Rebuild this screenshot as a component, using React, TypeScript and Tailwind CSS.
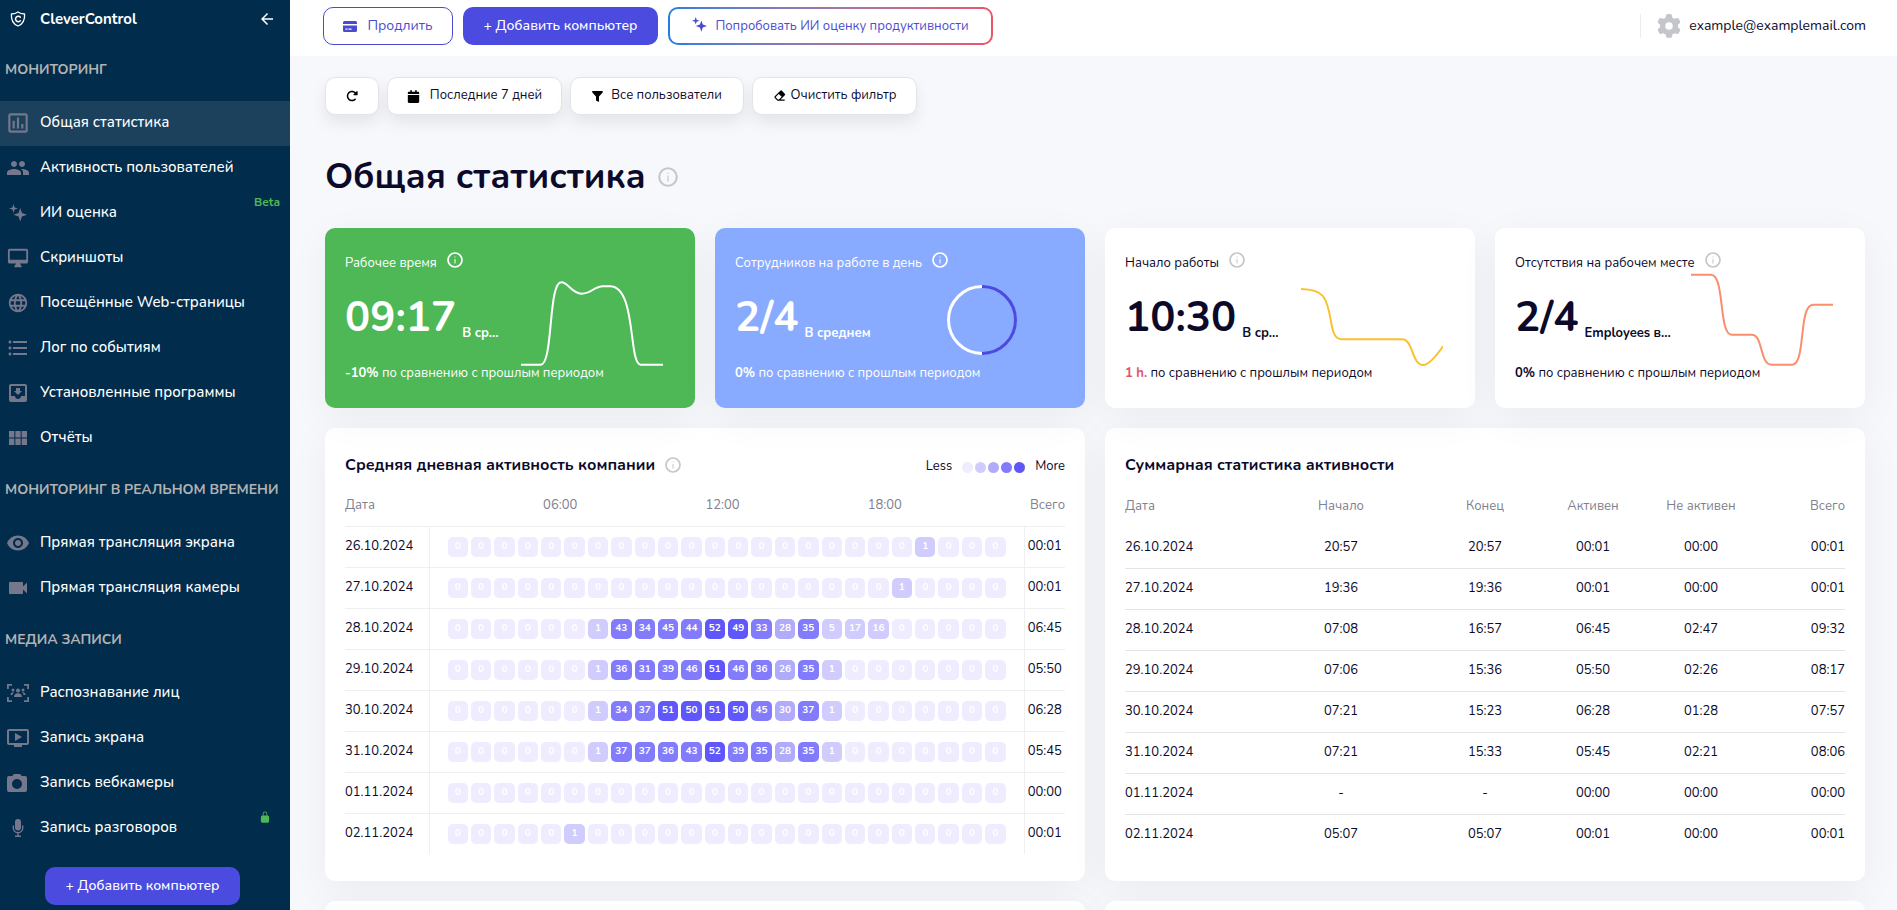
import React from "react";
import {
  MdArrowBack,
  MdFormatListBulleted,
  MdGroup,
  MdLanguage,
  MdMoveToInbox,
  MdOndemandVideo,
  MdOutlineDesktopMac,
  MdOutlinePoll,
  MdVideocam,
  MdViewModule,
  MdVisibility,
} from "react-icons/md";
import { FaCalendar, FaGear, FaRotateRight } from "react-icons/fa6";
import { IoLockClosed } from "react-icons/io5";
import { BiSolidEraser } from "react-icons/bi";

// Custom icons

const Logo = () => (
  <svg width="16" height="16" viewBox="0 0 16 16" fill="none" stroke="white" strokeLinecap="round" strokeLinejoin="round">
    <path d="M8 1C6 2.4 3.4 3 1.4 3c-.4 6 1.4 10 6.6 12 5.2-2 7-6 6.6-12C12.6 3 10 2.4 8 1Z" strokeWidth="1.3" />
    <path d="M10.3 6.2A2.7 2.7 0 1 0 10.3 9.7" strokeWidth="1.5" />
  </svg>
);

const Sparkles = ({ size = 20 }: { size?: number }) => (
  <svg width={size} height={size} viewBox="0 0 20 20" fill="currentColor">
    <path d="M5 0 6.2 3.8 10 5 6.2 6.2 5 10 3.8 6.2 0 5l3.8-1.2ZM12.5 4.5l1.9 5.6L20 12l-5.6 1.9-1.9 5.6-1.9-5.6L5 12l5.6-1.9Z" />
  </svg>
);

const FaceScan = () => (
  <svg width="22" height="18" viewBox="0 0 22 18" fill="currentColor">
    <path d="M0 5V0h5v1.800H1.800V5ZM17 0h5v5h-1.800V1.800H17ZM0 13h1.800v3.200H5V18H0ZM20.200 13H22v5h-5v-1.800h3.200Z" />
    <circle cx="11" cy="6.500" r="2" />
    <circle cx="6" cy="6" r="1.500" />
    <circle cx="16" cy="6" r="1.500" />
    <path d="M7 13c0-2.500 1.600-3.800 4-3.800s4 1.300 4 3.800ZM3.500 11c0-1.800 1-2.800 3.500-2.600-1 .8-1.500 1.500-1.600 2.600ZM18.500 11c0-1.800-1-2.800-3.500-2.600 1 .8 1.500 1.500 1.600 2.600Z" />
  </svg>
);

const Camera = () => (
  <svg width="20" height="18" viewBox="0 0 20 18" fill="currentColor" fillRule="evenodd" className="mr-[2px]">
    <path d="M7 0h6l1.800 2H18a2 2 0 0 1 2 2v12a2 2 0 0 1-2 2H2a2 2 0 0 1-2-2V4a2 2 0 0 1 2-2h3.200ZM10 5a5 5 0 1 0 0 10 5 5 0 0 0 0-10Z" />
  </svg>
);

const Mic = () => (
  <svg width="12" height="18" viewBox="0 0 12 18" fill="currentColor">
    <rect x="3" y="0" width="6" height="11.500" rx="3" />
    <path d="M1.300 6.500V9a4.700 4.700 0 0 0 9.400 0V6.500M6 13.500V17M3 17.300h6" fill="none" stroke="currentColor" strokeWidth="1.400" />
  </svg>
);

const CardIcon = () => (
  <svg width="14" height="11" viewBox="0 0 14 11" fill="currentColor">
    <path d="M1.500 0h11A1.500 1.500 0 0 1 14 1.500V3H0V1.500A1.500 1.500 0 0 1 1.500 0ZM0 4.500h14v5A1.500 1.500 0 0 1 12.500 11h-11A1.500 1.500 0 0 1 0 9.500Zm2.500 3v1.200h2V7.500Zm3 0v1.200h3V7.500Z" fillRule="evenodd" />
  </svg>
);

const Funnel = () => (
  <svg width="11" height="11" viewBox="0 0 11 11" fill="black">
    <path d="M.3 0h10.400v1.500L7 5.500V11L4 9.500v-4L.3 1.500Z" />
  </svg>
);

const Info = ({ size = 16, className = "text-[#c6c7cb]" }: { size?: number; className?: string }) => (
  <svg width={size} height={size} viewBox="0 0 16 16" fill="none" stroke="currentColor" className={className}>
    <circle cx="8" cy="8" r="7" strokeWidth="1.700" />
    <path d="M8 7v4.500M8 4.500v1" strokeWidth="1" />
  </svg>
);

// Data

type NavItem = { label: string; icon: React.ReactNode; active?: boolean; badge?: React.ReactNode };

const navGroups: { title: string; items: NavItem[] }[] = [
  {
    title: "МОНИТОРИНГ",
    items: [
      { label: "Общая статистика", icon: <MdOutlinePoll size={26} />, active: true },
      { label: "Активность пользователей", icon: <MdGroup size={24} /> },
      {
        label: "ИИ оценка",
        icon: <Sparkles size={18} />,
        badge: <span className="text-xs font-bold text-[#4eb857]">Beta</span>,
      },
      { label: "Скриншоты", icon: <MdOutlineDesktopMac size={22} /> },
      { label: "Посещённые Web-страницы", icon: <MdLanguage size={22} /> },
      { label: "Лог по событиям", icon: <MdFormatListBulleted size={24} /> },
      { label: "Установленные программы", icon: <MdMoveToInbox size={24} /> },
      { label: "Отчёты", icon: <MdViewModule size={24} /> },
    ],
  },
  {
    title: "МОНИТОРИНГ В РЕАЛЬНОМ ВРЕМЕНИ",
    items: [
      { label: "Прямая трансляция экрана", icon: <MdVisibility size={24} /> },
      { label: "Прямая трансляция камеры", icon: <MdVideocam size={24} /> },
    ],
  },
  {
    title: "МЕДИА ЗАПИСИ",
    items: [
      { label: "Распознавание лиц", icon: <FaceScan /> },
      { label: "Запись экрана", icon: <MdOndemandVideo size={24} /> },
      { label: "Запись вебкамеры", icon: <Camera /> },
      {
        label: "Запись разговоров",
        icon: <Mic />,
        badge: <IoLockClosed size={12} className="mr-[9px] text-[#4eb857]" />,
      },
    ],
  },
];

const zeros = (n: number): number[] => Array(n).fill(0);

const activity = [
  { date: "26.10.2024", hours: [...zeros(20), 1, ...zeros(3)], total: "00:01" },
  { date: "27.10.2024", hours: [...zeros(19), 1, ...zeros(4)], total: "00:01" },
  { date: "28.10.2024", hours: [...zeros(6), 1, 43, 34, 45, 44, 52, 49, 33, 28, 35, 5, 17, 16, ...zeros(5)], total: "06:45" },
  { date: "29.10.2024", hours: [...zeros(6), 1, 36, 31, 39, 46, 51, 46, 36, 26, 35, 1, ...zeros(7)], total: "05:50" },
  { date: "30.10.2024", hours: [...zeros(6), 1, 34, 37, 51, 50, 51, 50, 45, 30, 37, 1, ...zeros(7)], total: "06:28" },
  { date: "31.10.2024", hours: [...zeros(6), 1, 37, 37, 36, 43, 52, 39, 35, 28, 35, 1, ...zeros(7)], total: "05:45" },
  { date: "01.11.2024", hours: zeros(24), total: "00:00" },
  { date: "02.11.2024", hours: [...zeros(5), 1, ...zeros(18)], total: "00:01" },
];

const summary = [
  ["26.10.2024", "20:57", "20:57", "00:01", "00:00", "00:01"],
  ["27.10.2024", "19:36", "19:36", "00:01", "00:00", "00:01"],
  ["28.10.2024", "07:08", "16:57", "06:45", "02:47", "09:32"],
  ["29.10.2024", "07:06", "15:36", "05:50", "02:26", "08:17"],
  ["30.10.2024", "07:21", "15:23", "06:28", "01:28", "07:57"],
  ["31.10.2024", "07:21", "15:33", "05:45", "02:21", "08:06"],
  ["01.11.2024", "-", "-", "00:00", "00:00", "00:00"],
  ["02.11.2024", "05:07", "05:07", "00:01", "00:00", "00:01"],
];

const levels = ["bg-[#eeecfe]", "bg-[#d0ccfd]", "bg-[#b0abfb]", "bg-[#827bfb]", "bg-[#5f57fb]"];

const levelOf = (n: number) => {
  if (n === 0) return levels[0];
  if (n < 20) return levels[1];
  if (n <= 30) return levels[2];
  if (n < 49) return levels[3];
  return levels[4];
};

// Building blocks

const Sidebar = () => (
  <aside className="flex w-[290px] shrink-0 flex-col bg-[#012c4b] text-white">
    <div className="flex h-[41px] shrink-0 items-center pb-[3px] pl-[10px] pr-[14px]">
      <Logo />
      <a href="#" className="ml-[14px] text-[15px] font-bold">CleverControl</a>
      <button type="button" aria-label="Свернуть меню" className="ml-auto">
        <MdArrowBack size={18} />
      </button>
    </div>
    <nav>
      {navGroups.map((group) => (
        <section key={group.title}>
          <h2 className="flex h-[60px] items-center whitespace-nowrap pb-[2px] pl-[5px] text-sm font-bold text-[#b2b2b2]">
            {group.title}
          </h2>
          <ul>
            {group.items.map((item) => (
              <li key={item.label}>
                <a
                  href="#"
                  className={`relative flex h-[45px] items-center gap-2 pb-[2px] pl-1 text-[15px] font-medium ${item.active ? "bg-[#1b415d]" : ""}`}
                >
                  <span className="flex w-7 shrink-0 justify-center text-[#75778c]">{item.icon}</span>
                  {item.label}
                  {item.badge && <span className="absolute right-[10px] top-[3px] flex h-4 items-center">{item.badge}</span>}
                </a>
              </li>
            ))}
          </ul>
        </section>
      ))}
    </nav>
    <button type="button" className="ml-[45px] mt-4 h-[38px] w-[195px] shrink-0 rounded-[10px] bg-[#4b4be0] text-sm font-medium">
      + Добавить компьютер
    </button>
  </aside>
);

const Header = () => (
  <header className="flex h-14 shrink-0 items-center gap-[10px] bg-white pb-1 pl-[33px] pr-[31px] text-[#4b4bd0]">
    <button type="button" className="flex h-[38px] w-[130px] items-center justify-center gap-[10px] rounded-[10px] border border-[#4b4bd0] text-sm">
      <CardIcon />
      Продлить
    </button>
    <button type="button" className="h-[38px] w-[195px] rounded-[10px] bg-[#4b4be0] text-sm font-medium text-white">
      + Добавить компьютер
    </button>
    <button type="button" className="h-[38px] w-[325px] rounded-[10px] bg-linear-to-r from-[#1f7fe0] to-[#ea5468] p-[2px] text-[13px]">
      <span className="flex h-full items-center justify-center gap-2 rounded-lg bg-white pt-px">
        <span className="mb-1"><Sparkles size={15} /></span>
        Попробовать ИИ оценку продуктивности
      </span>
    </button>
    <a href="#" className="ml-auto flex h-6 items-center gap-2 border-l border-[#ececf0] pl-4 text-sm text-[#0c0a2b]">
      <FaGear size={24} className="text-[#c5c6cc]" />
      example@examplemail.com
    </a>
  </header>
);

const FilterButton = ({ className, children, label }: { className: string; children: React.ReactNode; label?: string }) => (
  <button
    type="button"
    aria-label={label}
    className={`flex h-[38px] items-center justify-center rounded-[10px] border border-[#e3e4e8] bg-white text-[13px] shadow-[0_8px_16px_rgba(0,0,0,0.08)] ${className}`}
  >
    {children}
  </button>
);

type StatProps = {
  title: string;
  value: string;
  unit: string;
  delta: string;
  tone?: string;
  infoTone?: string;
  deltaTone?: string;
  children: React.ReactNode;
};

const StatCard = ({ title, value, unit, delta, tone = "bg-white", infoTone, deltaTone = "", children }: StatProps) => (
  <article className={`relative rounded-[10px] px-5 pb-[25px] pt-[26px] shadow-[0_10px_40px_rgba(0,0,0,0.05)] ${tone}`}>
    <h3 className="flex h-5 items-center gap-[10px] text-[13px]">
      {title}
      <span className="mb-2"><Info className={infoTone} /></span>
    </h3>
    <p className="mt-5 flex items-end gap-[6px] font-bold">
      <span className="text-[42px] leading-12">{value}</span>
      <span className="pb-[3px] text-[13px] leading-3">{unit}</span>
    </p>
    <p className="mt-[21px] text-[13px] leading-5">
      <b className={deltaTone}>{delta}</b> по сравнению с прошлым периодом
    </p>
    {children}
  </article>
);

const Sparkline = ({ d, className }: { d: string; className: string }) => (
  <svg width="142" height="95" viewBox="633 157 426 285" fill="none" stroke="currentColor" strokeWidth="6" className={`absolute right-8 top-11 ${className}`}>
    <path d={d} />
  </svg>
);

const panel = "rounded-[10px] bg-white px-5 pb-[26px] pt-[25px] shadow-[0_10px_40px_rgba(0,0,0,0.05)]";

const ActivityPanel = () => (
  <section className={panel}>
    <div className="flex h-6 items-center">
      <h2 className="text-base font-bold">Средняя дневная активность компании</h2>
      <span className="ml-[10px]"><Info /></span>
      <div className="ml-auto flex items-center gap-[10px] pt-1 text-[13px]">
        Less
        <span className="flex gap-[2px]">
          {levels.map((l) => <i key={l} className={`size-[11px] rounded-full ${l}`} />)}
        </span>
        More
      </div>
    </div>
    <table className="mt-[9px] w-full table-fixed border-collapse text-[13px]">
      <thead>
        <tr className="h-10 border-b border-[#efeff1] text-[#80808f]">
          <th className="w-[84px] p-0 text-left font-normal">Дата</th>
          <th className="p-0 font-normal">
            <span className="grid grid-cols-3 pl-[50px] pr-[58px]">
              <span>06:00</span>
              <span>12:00</span>
              <span>18:00</span>
            </span>
          </th>
          <th className="w-[41px] p-0 text-right font-normal">Всего</th>
        </tr>
      </thead>
      <tbody>
        {activity.map((row) => (
          <tr key={row.date} className="h-[41px] border-b border-[#efeff1] last:border-b-0">
            <td className="p-0">{row.date}</td>
            <td className="border-x border-[#efeff1] px-[18px] py-0">
              <div className="grid grid-cols-24 gap-[3px]">
                {row.hours.map((n, i) => (
                  <span key={i} className={`flex h-5 items-center justify-center rounded-[5px] text-[10px] font-bold text-white ${levelOf(n)}`}>
                    {n}
                  </span>
                ))}
              </div>
            </td>
            <td className="p-0 text-center">{row.total}</td>
          </tr>
        ))}
      </tbody>
    </table>
  </section>
);

const SummaryPanel = () => (
  <section className={panel}>
    <h2 className="h-6 text-base font-bold">Суммарная статистика активности</h2>
    <table className="mt-[10px] w-full table-fixed border-collapse text-center text-[13px]">
      <thead>
        <tr className="h-10 text-[#80808f]">
          <th className="w-1/5 p-0 text-left font-normal">Дата</th>
          <th className="w-1/5 p-0 font-normal">Начало</th>
          <th className="w-1/5 p-0 font-normal">Конец</th>
          <th className="w-1/10 p-0 font-normal">Активен</th>
          <th className="w-1/5 p-0 font-normal">Не активен</th>
          <th className="w-1/10 p-0 text-right font-normal">Всего</th>
        </tr>
      </thead>
      <tbody>
        {summary.map((row) => (
          <tr key={row[0]} className="h-[41px] border-b border-[#e4e4e8] last:border-b-0">
            {row.map((cell, i) => (
              <td key={i} className="p-0 first:text-left last:text-right">{cell}</td>
            ))}
          </tr>
        ))}
      </tbody>
    </table>
  </section>
);

export default function App() {
  return (
    <div className="flex h-screen overflow-hidden bg-[#f7f8fc] font-['Nunito','Open_Sans',sans-serif] text-[#0c0a2b]">
      <Sidebar />
      <div className="flex min-w-0 flex-1 flex-col overflow-hidden">
        <Header />
        <main className="pl-[35px] pr-8 pt-[21px]">
          <div className="flex gap-2">
            <FilterButton className="w-[54px]" label="Обновить">
              <FaRotateRight size={12} className="text-black" />
            </FilterButton>
            <FilterButton className="w-[175px] gap-[10px]">
              <FaCalendar size={13} className="text-black" />
              Последние 7 дней
            </FilterButton>
            <FilterButton className="w-[174px] gap-2">
              <Funnel />
              Все пользователи
            </FilterButton>
            <FilterButton className="w-[165px] gap-1">
              <BiSolidEraser size={14} className="text-black" />
              Очистить фильтр
            </FilterButton>
          </div>
          <div className="mt-[38px] flex h-12 items-center gap-3">
            <h1 className="text-4xl font-bold">Общая статистика</h1>
            <Info size={20} />
          </div>

          <div className="mt-[27px] grid grid-cols-4 gap-5">
            <StatCard title="Рабочее время" value="09:17" unit="В ср..." delta="-10%" tone="bg-[#4eb857] text-white" infoTone="text-white">
              <Sparkline className="text-white" d="M633 435H692C730 435 714 188 754 188C775 188 785 222 815 222C845 222 850 200 880 200H900C980 200 955 435 992 435H1059" />
            </StatCard>
            <StatCard title="Сотрудников на работе в день" value="2/4" unit="В среднем" delta="0%" tone="bg-[#89abff] text-white" infoTone="text-white">
              <svg width="70" height="70" viewBox="0 0 70 70" fill="none" strokeWidth="3" className="absolute right-[68px] top-[57px]">
                <path d="M35 1.500A33.500 33.500 0 0 0 35 68.500" stroke="white" />
                <path d="M35 1.500A33.500 33.500 0 0 1 35 68.500" stroke="#4b4be0" />
              </svg>
            </StatCard>
            <StatCard title="Начало работы" value="10:30" unit="В ср..." delta="1 h." deltaTone="text-[#e4526a]">
              <Sparkline className="text-[#fbc02f]" d="M633 208C700 210 710 230 722 300C728 340 735 358 755 359H935C970 357 965 436 999 436C1020 436 1045 400 1059 380" />
            </StatCard>
            <StatCard title="Отсутствия на рабочем месте" value="2/4" unit="Employees в..." delta="0%">
              <Sparkline className="text-[#fa8e6c]" d="M633 165H693C735 165 715 345 755 345H815C850 345 838 435 875 435H937C978 435 955 255 999 255H1059" />
            </StatCard>
          </div>

          <div className="mt-5 grid grid-cols-2 gap-5 pb-5">
            <ActivityPanel />
            <SummaryPanel />
            <section className={panel} />
            <section className={panel} />
          </div>
        </main>
      </div>
    </div>
  );
}
